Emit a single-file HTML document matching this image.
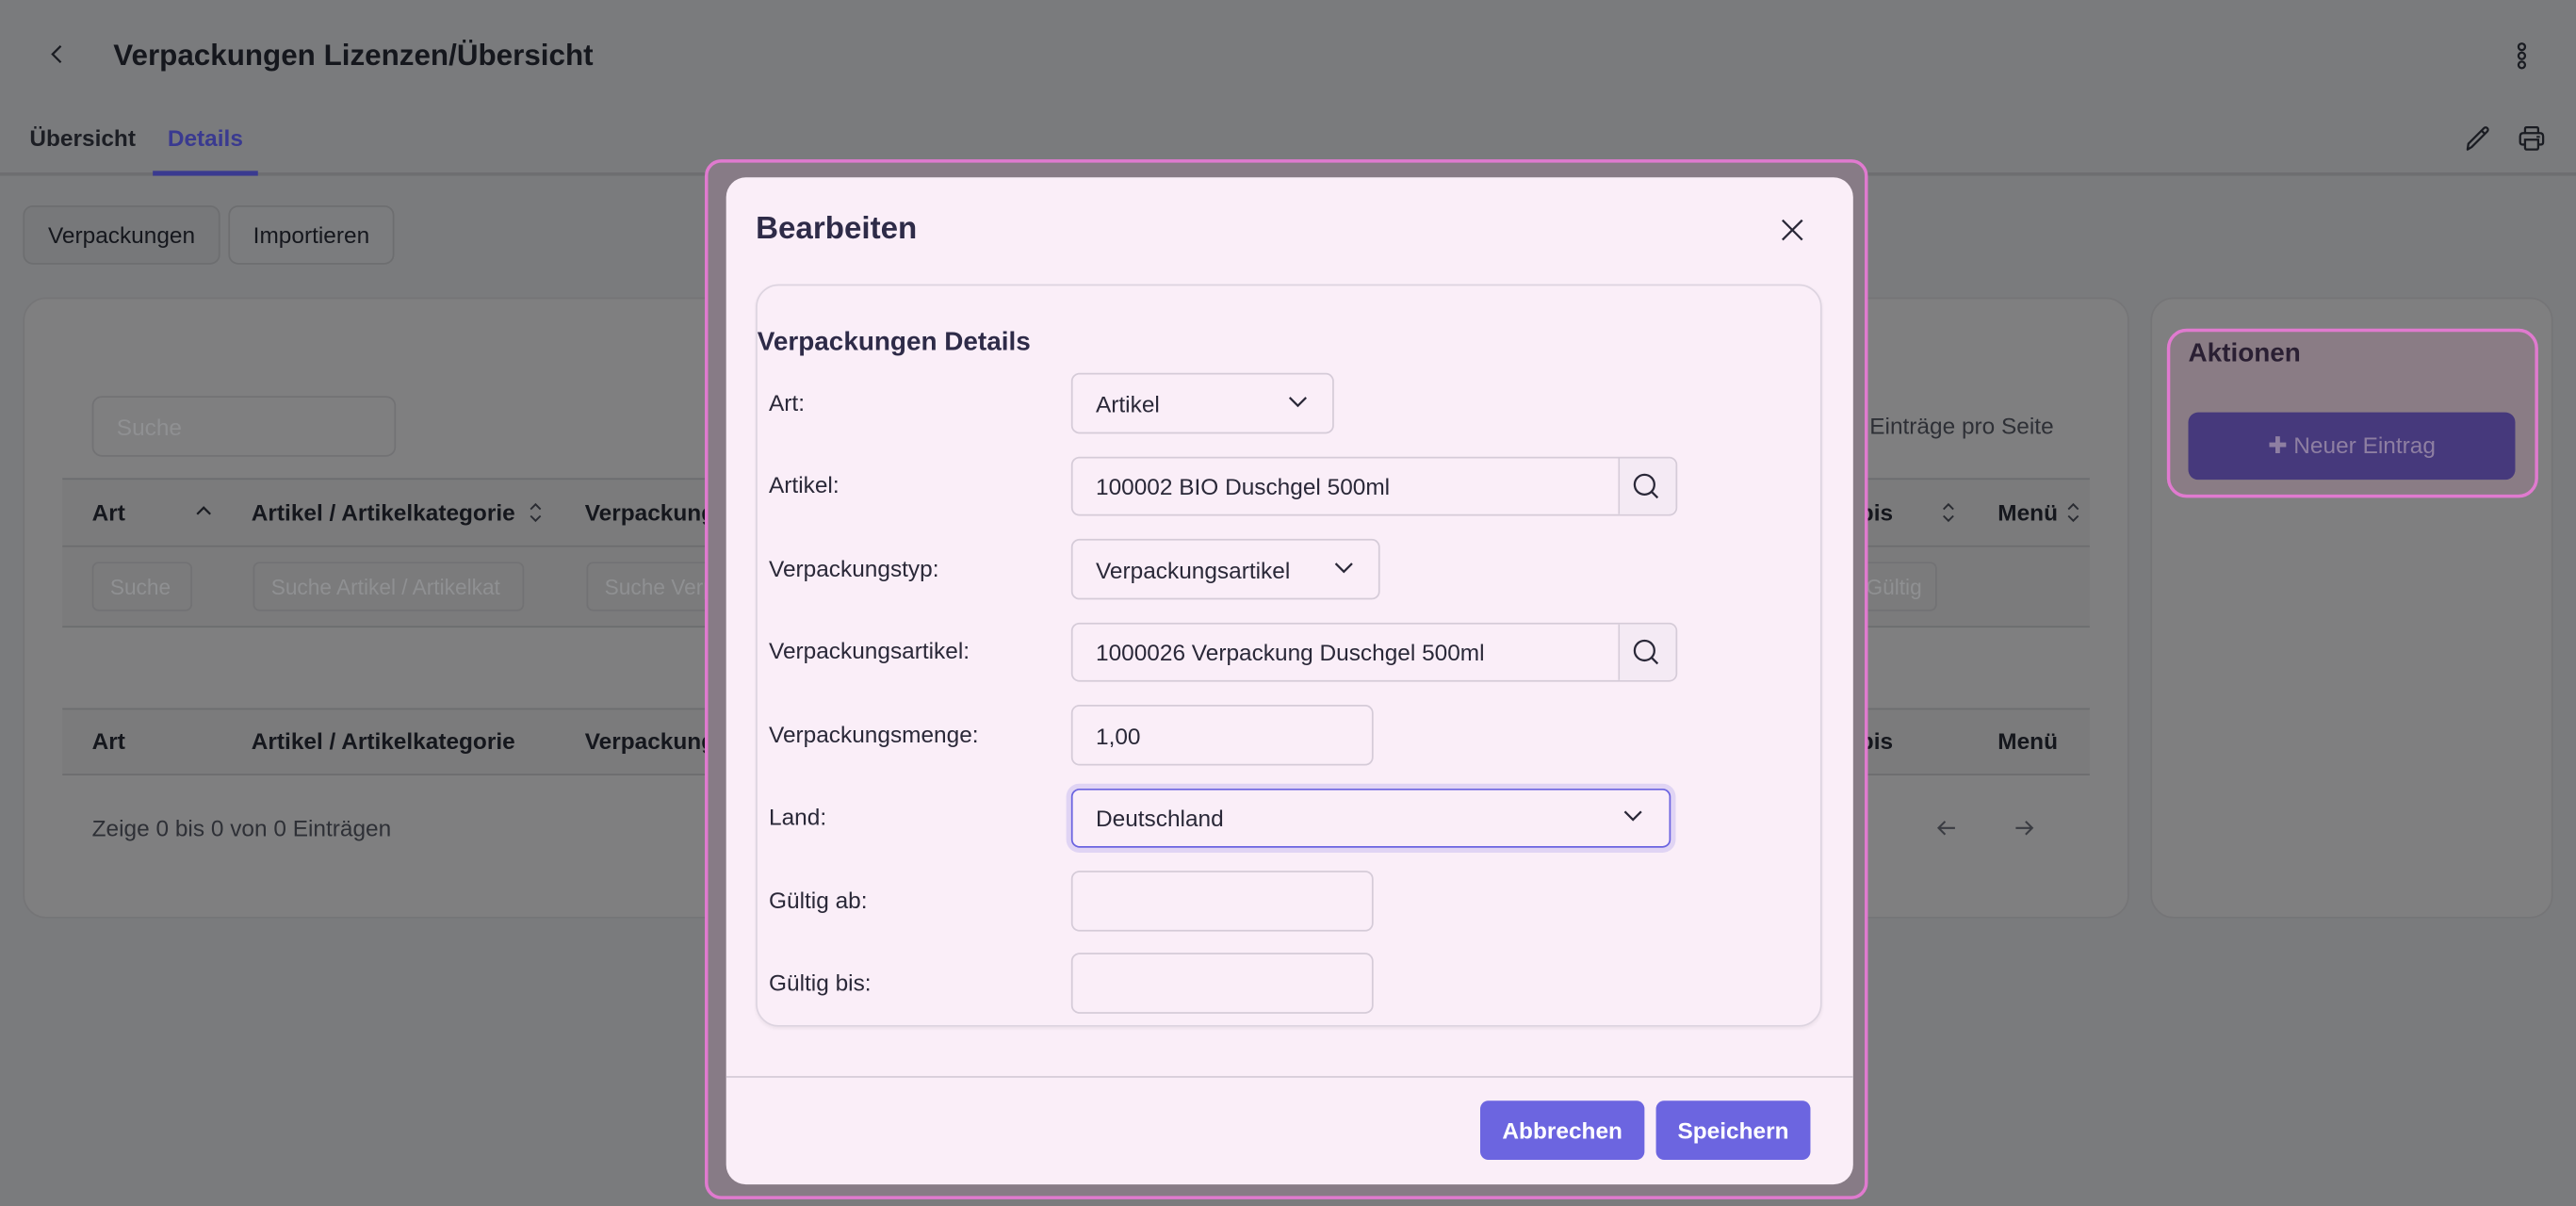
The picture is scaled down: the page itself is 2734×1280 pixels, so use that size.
<!DOCTYPE html>
<html><head><meta charset="utf-8"><style>
*{box-sizing:border-box;margin:0;padding:0}
html,body{width:2734px;height:1280px;overflow:hidden;background:#7a7b7d}
#s{position:absolute;left:0;top:0;width:1568px;height:734px;transform:scale(1.74362);transform-origin:0 0;font-family:"Liberation Sans",sans-serif;color:#15171d;background:#7a7b7d}
.a{position:absolute}
.t{position:absolute;white-space:nowrap;transform:translateY(-50%)}
.card{position:absolute;background:#7f7f80;border:1px solid #757577;border-radius:14px}
.btn{position:absolute;border:1px solid #6d6e70;border-radius:6px;background:#7b7c7e;font-size:14px;display:flex;align-items:center;justify-content:center}
.inp{position:absolute;border:1px solid #727274;border-radius:4px;color:#8f9092;font-size:13px;padding-left:10px;display:flex;align-items:center;overflow:hidden;white-space:nowrap}
.th{font-weight:bold;font-size:14px}
.f{position:absolute;border:1px solid #d5cbd8;border-radius:5px;background:#faeef8;font-size:14px;color:#2a2838;display:flex;align-items:center;padding-left:14px}
.lab{position:absolute;font-size:14px;color:#2a2838;transform:translateY(-50%);white-space:nowrap}
</style></head><body><div id="s">
<!-- header -->
<svg class="a" style="left:29px;top:26px" width="12" height="14" viewBox="0 0 12 14"><path d="M8 2 L3 7 L8 12" fill="none" stroke="#1a1c22" stroke-width="1.3"/></svg>
<div class="t" style="left:69px;top:34px;font-size:18px;font-weight:bold;color:#15171d">Verpackungen Lizenzen/Übersicht</div>
<svg class="a" style="left:1530px;top:25px" width="10" height="18" viewBox="0 0 10 18"><circle cx="5" cy="3.5" r="2" fill="none" stroke="#1a1c22" stroke-width="1.3"/><circle cx="5" cy="9" r="2" fill="none" stroke="#1a1c22" stroke-width="1.3"/><circle cx="5" cy="14.5" r="2" fill="none" stroke="#1a1c22" stroke-width="1.3"/></svg>
<div class="t" style="left:18px;top:84px;font-size:14px;font-weight:bold;color:#1c1e24">Übersicht</div>
<div class="t" style="left:102px;top:84px;font-size:14px;font-weight:bold;color:#3a3a90">Details</div>
<div class="a" style="left:0;top:105px;width:1568px;height:2px;background:#6d6e70"></div>
<div class="a" style="left:93px;top:104px;width:64px;height:3px;background:#3a3a90"></div>
<svg class="a" style="left:1499px;top:75px" width="18" height="18" viewBox="0 0 18 18"><path d="M3 16 L3.5 12.5 L13 3 A1.4 1.4 0 0 1 15 5 L5.5 14.5 Z M11.5 4.5 L13.5 6.5" fill="none" stroke="#1a1c22" stroke-width="1.3" stroke-linejoin="round"/></svg>
<svg class="a" style="left:1532px;top:75px" width="18" height="18" viewBox="0 0 18 18"><path d="M5 6 V3.5 Q5 2.5 6 2.5 H12 Q13 2.5 13 3.5 V6 M5 13 H3.5 Q2 13 2 11.5 V8 Q2 6 4 6 H14 Q16 6 16 8 V11.5 Q16 13 14.5 13 H13 M5 10 H13 V15 Q13 16 12 16 H6 Q5 16 5 15 Z" fill="none" stroke="#1a1c22" stroke-width="1.3"/><path d="M12 8.3 H14" stroke="#1a1c22" stroke-width="1.2"/></svg>
<div class="btn" style="left:14px;top:125px;width:120px;height:36px;background:#77787a">Verpackungen</div>
<div class="btn" style="left:139px;top:125px;width:101px;height:36px">Importieren</div>
<!-- main card -->
<div class="card" style="left:14px;top:181px;width:1282px;height:378px"></div>
<div class="inp" style="left:56px;top:241px;width:185px;height:37px;border-radius:6px;font-size:14px;padding-left:14px">Suche</div>
<div class="t" style="left:1138px;top:259px;font-size:14px;color:#2e3036">Einträge pro Seite</div>
<div class="a" style="left:38px;top:291px;width:1234px;height:91px;background:#7b7b7c;border-top:1px solid #6c6d6f;border-bottom:1px solid #6c6d6f"></div>
<div class="a" style="left:38px;top:332px;width:1234px;height:1px;background:#6c6d6f"></div>
<div class="t th" style="left:56px;top:312px">Art</div>
<svg class="a" style="left:119px;top:307px" width="10" height="8"><path d="M1 6 L5 2 L9 6" fill="none" stroke="#1a1c22" stroke-width="1.3"/></svg>
<div class="t th" style="left:153px;top:312px">Artikel / Artikelkategorie</div>
<svg class="a" style="left:321px;top:304px" width="10" height="16"><path d="M2 6 L5 3 L8 6 M2 10 L5 13 L8 10" fill="none" stroke="#2a2c32" stroke-width="1.1"/></svg>
<div class="t th" style="left:356px;top:312px">Verpackungs</div>
<div class="t th" style="left:1132px;top:312px">bis</div>
<svg class="a" style="left:1181px;top:304px" width="10" height="16"><path d="M2 6 L5 3 L8 6 M2 10 L5 13 L8 10" fill="none" stroke="#2a2c32" stroke-width="1.1"/></svg>
<div class="t th" style="left:1216px;top:312px">Menü</div>
<svg class="a" style="left:1257px;top:304px" width="10" height="16"><path d="M2 6 L5 3 L8 6 M2 10 L5 13 L8 10" fill="none" stroke="#2a2c32" stroke-width="1.1"/></svg>
<div class="inp" style="left:56px;top:342px;width:61px;height:30px">Suche</div>
<div class="inp" style="left:154px;top:342px;width:165px;height:30px">Suche Artikel / Artikelkat</div>
<div class="inp" style="left:357px;top:342px;width:90px;height:30px">Suche Verpa</div>
<div class="inp" style="left:1110px;top:342px;width:69px;height:30px;padding-left:14px">e Gültig</div>
<div class="a" style="left:38px;top:431px;width:1234px;height:41px;background:#7b7b7c;border-top:1px solid #6c6d6f;border-bottom:1px solid #6c6d6f"></div>
<div class="t th" style="left:56px;top:451px">Art</div>
<div class="t th" style="left:153px;top:451px">Artikel / Artikelkategorie</div>
<div class="t th" style="left:356px;top:451px">Verpackungs</div>
<div class="t th" style="left:1132px;top:451px">bis</div>
<div class="t th" style="left:1216px;top:451px">Menü</div>
<div class="t" style="left:56px;top:504px;font-size:14px;color:#2e3036">Zeige 0 bis 0 von 0 Einträgen</div>
<svg class="a" style="left:1178px;top:497px" width="14" height="14"><path d="M12 7 H2 M6 3 L2 7 L6 11" fill="none" stroke="#3a3c42" stroke-width="1.2"/></svg>
<svg class="a" style="left:1225px;top:497px" width="14" height="14"><path d="M2 7 H12 M8 3 L12 7 L8 11" fill="none" stroke="#3a3c42" stroke-width="1.2"/></svg>
<!-- right card -->
<div class="card" style="left:1309px;top:181px;width:245px;height:378px"></div>
<div class="a" style="left:1319px;top:200px;width:226px;height:103px;border:2px solid #e07acf;border-radius:12px;background:#8a7c85"></div>
<div class="t" style="left:1332px;top:216px;font-size:16px;font-weight:bold;color:#2a1f33">Aktionen</div>
<div class="a" style="left:1332px;top:251px;width:199px;height:41px;background:#46397c;border-radius:6px;color:#8e7fa2;font-size:14px;display:flex;align-items:center;justify-content:center">✚ Neuer Eintrag</div>
<!-- modal -->
<div class="a" style="left:429px;top:97px;width:708px;height:633px;border:2px solid #e07acf;border-radius:10px;background:#877b86"></div>
<div class="a" style="left:442px;top:108px;width:686px;height:613px;background:#faeef8;border-radius:12px"></div>
<div class="t" style="left:460px;top:140px;font-size:19px;font-weight:bold;color:#2e2b48">Bearbeiten</div>
<svg class="a" style="left:1083px;top:132px" width="16" height="16"><path d="M2 2 L14 14 M14 2 L2 14" stroke="#2a2838" stroke-width="1.3"/></svg>
<div class="a" style="left:460px;top:173px;width:649px;height:452px;border:1px solid #ddd4e0;border-radius:14px;box-shadow:0 1px 2px rgba(0,0,0,.06)"></div>
<div class="t" style="left:461px;top:209px;font-size:16px;font-weight:bold;color:#2e2b48">Verpackungen Details</div>
<div class="lab" style="left:468px;top:245px">Art:</div>
<div class="f" style="left:652px;top:227px;width:160px;height:37px">Artikel</div>
<svg class="a" style="left:783px;top:240px" width="14" height="10"><path d="M2 2 L7 7 L12 2" fill="none" stroke="#2a2838" stroke-width="1.3"/></svg>
<div class="lab" style="left:468px;top:295px">Artikel:</div>
<div class="f" style="left:652px;top:278px;width:369px;height:36px">100002 BIO Duschgel 500ml</div>
<div class="a" style="left:985px;top:279px;width:35px;height:34px;border-left:1px solid #d5cbd8;background:#f4eaf4;border-radius:0 5px 5px 0"></div>
<svg class="a" style="left:993px;top:287px" width="18" height="18"><circle cx="8" cy="8" r="6" fill="none" stroke="#2a2838" stroke-width="1.3"/><path d="M12.5 12.5 L16 16" stroke="#2a2838" stroke-width="1.3"/></svg>
<div class="lab" style="left:468px;top:346px">Verpackungstyp:</div>
<div class="f" style="left:652px;top:328px;width:188px;height:37px">Verpackungsartikel</div>
<svg class="a" style="left:811px;top:341px" width="14" height="10"><path d="M2 2 L7 7 L12 2" fill="none" stroke="#2a2838" stroke-width="1.3"/></svg>
<div class="lab" style="left:468px;top:396px">Verpackungsartikel:</div>
<div class="f" style="left:652px;top:379px;width:369px;height:36px">1000026 Verpackung Duschgel 500ml</div>
<div class="a" style="left:985px;top:380px;width:35px;height:34px;border-left:1px solid #d5cbd8;background:#f4eaf4;border-radius:0 5px 5px 0"></div>
<svg class="a" style="left:993px;top:388px" width="18" height="18"><circle cx="8" cy="8" r="6" fill="none" stroke="#2a2838" stroke-width="1.3"/><path d="M12.5 12.5 L16 16" stroke="#2a2838" stroke-width="1.3"/></svg>
<div class="lab" style="left:468px;top:447px">Verpackungsmenge:</div>
<div class="f" style="left:652px;top:429px;width:184px;height:37px">1,00</div>
<div class="lab" style="left:468px;top:497px">Land:</div>
<div class="f" style="left:652px;top:480px;width:365px;height:36px;border:1px solid #6a63e0;box-shadow:0 0 0 3px #e0d4f4">Deutschland</div>
<svg class="a" style="left:987px;top:492px" width="14" height="10"><path d="M2 2 L7 7 L12 2" fill="none" stroke="#2a2838" stroke-width="1.3"/></svg>
<div class="lab" style="left:468px;top:548px">Gültig ab:</div>
<div class="f" style="left:652px;top:530px;width:184px;height:37px"></div>
<div class="lab" style="left:468px;top:598px">Gültig bis:</div>
<div class="f" style="left:652px;top:580px;width:184px;height:37px"></div>
<div class="a" style="left:442px;top:655px;width:686px;height:1px;background:#d5cbd8"></div>
<div class="a" style="left:901px;top:670px;width:100px;height:36px;background:#6c65e0;border-radius:5px;color:#fff;font-size:14px;font-weight:bold;display:flex;align-items:center;justify-content:center">Abbrechen</div>
<div class="a" style="left:1008px;top:670px;width:94px;height:36px;background:#6c65e0;border-radius:5px;color:#fff;font-size:14px;font-weight:bold;display:flex;align-items:center;justify-content:center">Speichern</div>
</div></body></html>
